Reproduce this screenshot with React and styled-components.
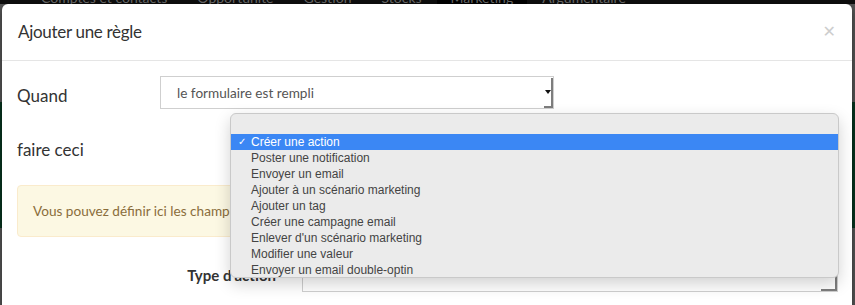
import React from "react";
import styled, { createGlobalStyle } from "styled-components";

const GlobalStyle = createGlobalStyle`
  html, body {
    margin: 0;
    padding: 0;
    height: 100%;
    overflow: hidden;
    background: #575757;
    font-family: Lato, "Open Sans", sans-serif;
  }
`;

const Page = styled.div`
  position: relative;
  height: 305px;
  overflow: hidden;
`;

const Navbar = styled.div`
  height: 4px;
  background: #0e0e0e;
  display: flex;
  overflow: hidden;
  padding-left: 10px;
`;

const NavItem = styled.div`
  height: 4px;
  padding: 0 ${(p) => (p.$active ? 14 : 15)}px;
  background: ${(p) => (p.$active ? "#000" : "transparent")};
  color: #6c6c6c;
  font-size: 14px;
  line-height: 16px;
  white-space: nowrap;
  margin-left: ${(p) => p.$gap || 0}px;
`;

const NavText = styled.span`
  display: block;
  margin-top: -10px;
`;

const Band = styled.div`
  margin-top: 98px;
  height: 126px;
  background: #073620;
`;

const Modal = styled.div`
  position: absolute;
  top: 4px;
  left: 2px;
  width: 850px;
  height: 340px;
  background: #fff;
  border-radius: 6px;
  box-shadow: 0 3px 9px rgba(0, 0, 0, 0.5);
`;

const Header = styled.div`
  display: flex;
  align-items: center;
  justify-content: space-between;
  padding: 15px 16px 15px 16px;
  border-bottom: 1px solid #e5e5e5;
`;

const Title = styled.h4`
  margin: 0;
  font-size: 17px;
  letter-spacing: -0.3px;
  line-height: 26px;
  font-weight: 400;
  color: #333;
`;

const Close = styled.span`
  font-family: "DejaVu Sans", sans-serif;
  font-size: 16px;
  font-weight: 700;
  line-height: 20px;
  color: #cdcdcd;
`;

const Body = styled.div`
  padding: 15px;
`;

const FormRow = styled.div`
  display: grid;
  grid-template-columns: ${(p) => p.$cols};
  align-items: center;
  height: ${(p) => p.$h || 33}px;
  margin-top: ${(p) => p.$mt || 0}px;
`;

const Label = styled.div`
  font-size: 17px;
  color: #333;
  padding-top: ${(p) => p.$pt || 0}px;
`;

const BoldLabel = styled.div`
  font-size: 15px;
  font-weight: 700;
  color: #333;
  text-align: right;
  padding-right: 26px;
`;

const SelectBox = styled.div`
  height: ${(p) => p.$h || 33}px;
  box-sizing: border-box;
  border: 1px solid #cfcfcf;
  display: flex;
  align-items: stretch;
  background: #fff;
`;

const SelectText = styled.div`
  flex: 1;
  display: flex;
  align-items: center;
  padding-left: 16px;
  font-size: 13.6px;
  color: #555;
`;

const ArrowCell = styled.div`
  width: ${(p) => p.$w || 9}px;
  box-sizing: border-box;
  border-right: 2px solid #7d7d7d;
  border-bottom: 2px solid #7d7d7d;
  margin-top: 1px;
  display: flex;
  align-items: center;
  justify-content: center;
`;

const Triangle = styled.span`
  width: 0;
  height: 0;
  border-left: 3px solid transparent;
  border-right: 3px solid transparent;
  border-top: 4px solid #111;
`;

const Alert = styled.div`
  margin-top: 19px;
  padding: 15px;
  border: 1px solid #faebcc;
  background: #fcf8e3;
  color: #8a6d3b;
  border-radius: 4px;
  font-size: 13.6px;
  line-height: 20px;
  white-space: nowrap;
  overflow: hidden;
`;

const Popup = styled.div`
  position: absolute;
  top: 109px;
  left: 228px;
  width: 609px;
  height: 165px;
  box-sizing: border-box;
  padding-top: 20px;
  background: #ebebeb;
  border: 1px solid #c9c9c9;
  border-radius: 6px;
  box-shadow: 0 6px 16px rgba(0, 0, 0, 0.18);
  overflow: hidden;
  font-family: "Liberation Sans", Arial, sans-serif;
`;

const MenuItem = styled.div`
  position: relative;
  height: 16px;
  line-height: 16px;
  padding-left: 20px;
  font-size: 12px;
  color: ${(p) => (p.$active ? "#fff" : "#444")};
  background: ${(p) => (p.$active ? "#3b87f4" : "transparent")};
  white-space: nowrap;
`;

const Check = styled.span`
  position: absolute;
  left: 7px;
  top: 0;
  font-family: "DejaVu Sans", sans-serif;
  font-size: 10px;
`;

const navItems = [
  { t: "Comptes et contacts", gap: 16 },
  { t: "Opportunité" },
  { t: "Gestion" },
  { t: "Stocks" },
  { t: "Marketing", active: true },
  { t: "Argumentaire" },
];

const options = [
  "Créer une action",
  "Poster une notification",
  "Envoyer un email",
  "Ajouter à un scénario marketing",
  "Ajouter un tag",
  "Créer une campagne email",
  "Enlever d'un scénario marketing",
  "Modifier une valeur",
  "Envoyer un email double-optin",
];

export default function App() {
  return (
    <>
      <GlobalStyle />
      <Page>
        <Navbar>
          {navItems.map((n) => (
            <NavItem key={n.t} $active={n.active} $gap={n.gap}>
              <NavText>{n.t}</NavText>
            </NavItem>
          ))}
        </Navbar>
        <Band />
        <Modal>
          <Header>
            <Title>Ajouter une règle</Title>
            <Close>✕</Close>
          </Header>
          <Body>
            <FormRow $cols="143px 394px">
              <Label $pt={6}>Quand</Label>
              <SelectBox>
                <SelectText>le formulaire est rempli</SelectText>
                <ArrowCell>
                  <Triangle />
                </ArrowCell>
              </SelectBox>
            </FormRow>
            <FormRow $cols="143px 1fr" $mt={24}>
              <Label>faire ceci</Label>
            </FormRow>
            <Alert>
              Vous pouvez définir ici les champs à renseigner pour l'action qui sera créée.
            </Alert>
            <FormRow $cols="285px 536px" $h={34} $mt={21}>
              <BoldLabel>Type d'action</BoldLabel>
              <SelectBox $h={34}>
                <SelectText />
                <ArrowCell $w={16} />
              </SelectBox>
            </FormRow>
          </Body>
          <Popup>
            {options.map((o, i) => (
              <MenuItem key={o} $active={i === 0}>
                {i === 0 && <Check>✓</Check>}
                {o}
              </MenuItem>
            ))}
          </Popup>
        </Modal>
      </Page>
    </>
  );
}
